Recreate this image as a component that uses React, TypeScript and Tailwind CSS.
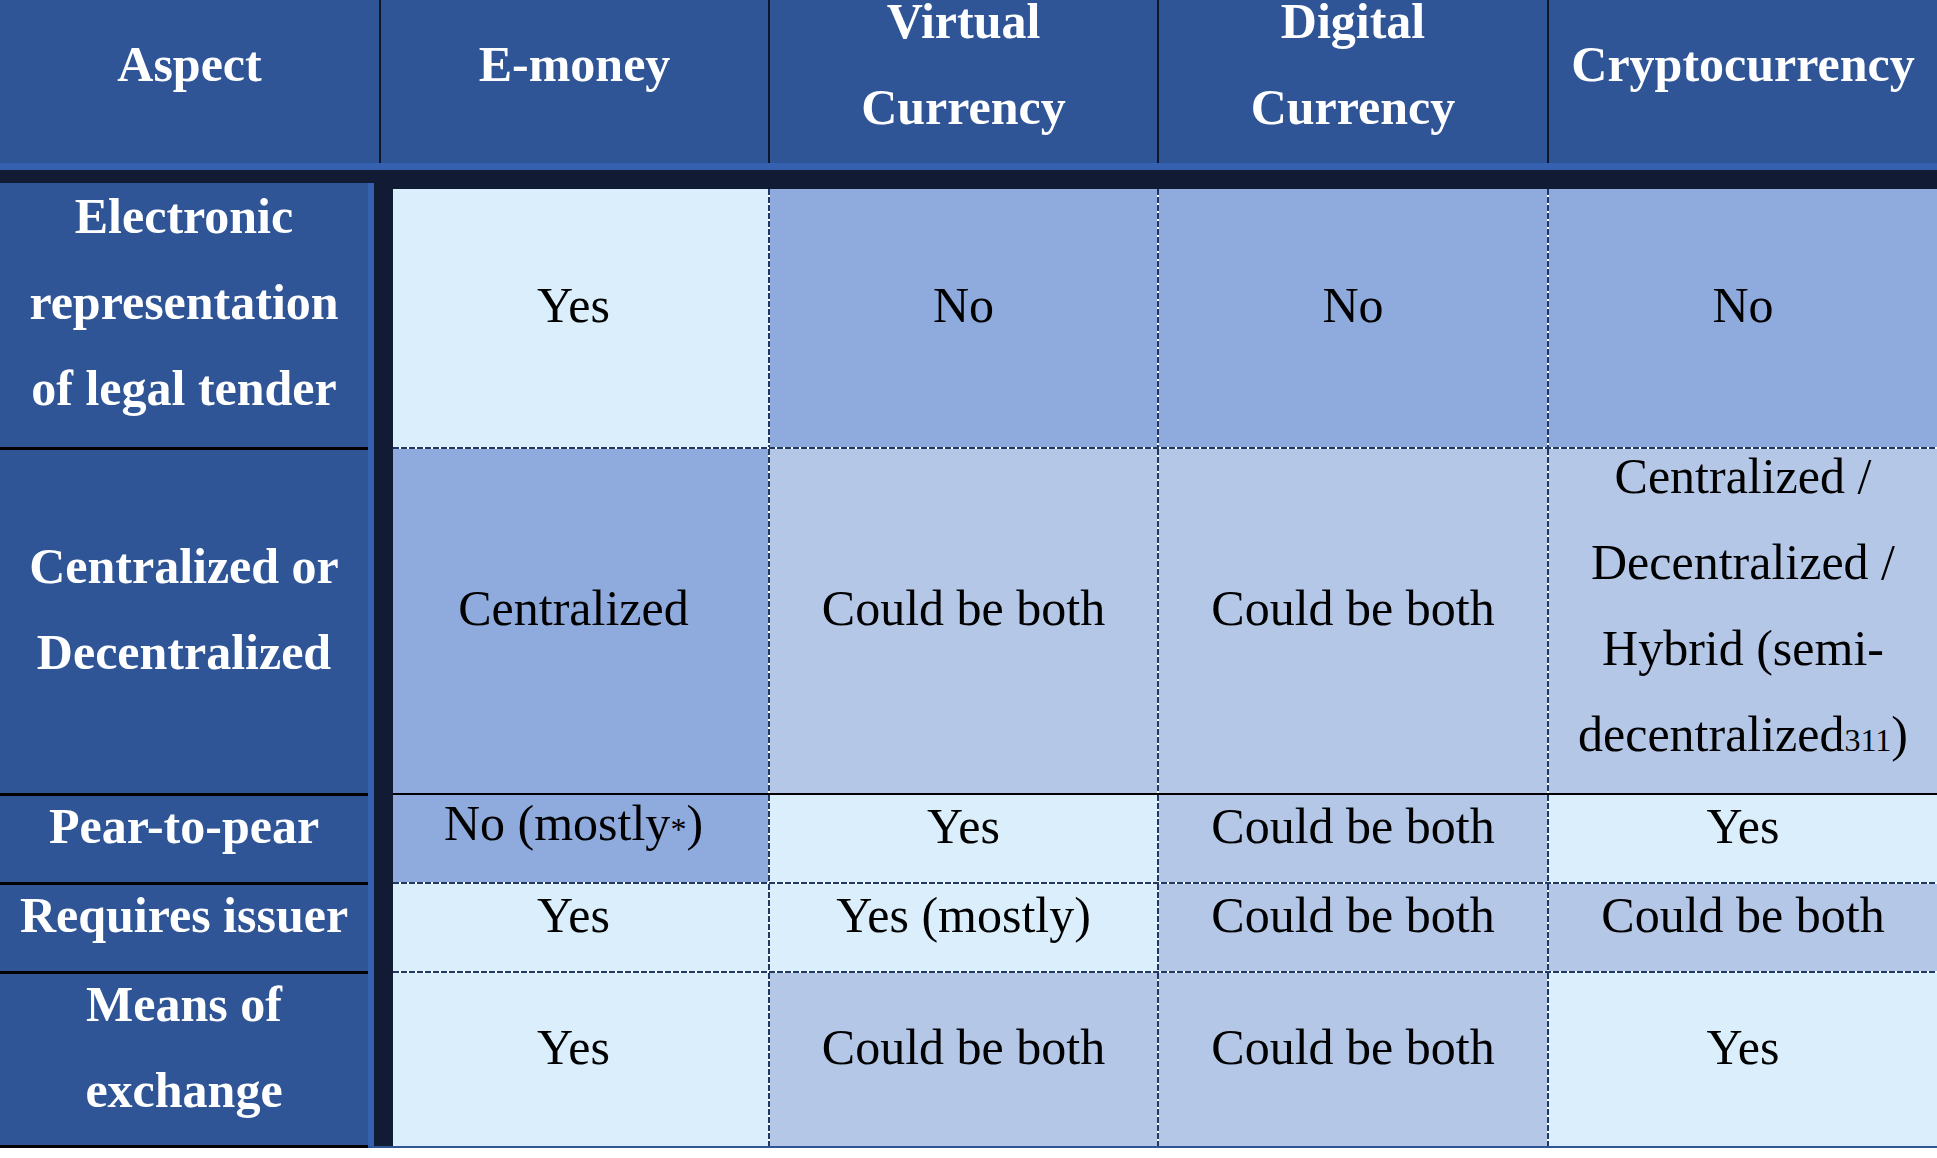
import React from "react";

type Cell = { text: React.ReactNode; bg: string };
type Row = {
  label: string[];
  labelH: string;
  dataH: string;
  cells: Cell[];
  sep: "dashed" | "solid" | "none";
};

const LIGHT = "bg-[#daeefc]";
const MED = "bg-[#8faadc]";
const SOFT = "bg-[#b4c7e7]";

const rows: Row[] = [
  {
    label: ["Electronic", "representation", "of legal tender"],
    labelH: "h-[267px]",
    dataH: "h-[258px]",
    cells: [
      { text: "Yes", bg: LIGHT },
      { text: "No", bg: MED },
      { text: "No", bg: MED },
      { text: "No", bg: MED },
    ],
    sep: "dashed",
  },
  {
    label: ["Centralized or", "Decentralized"],
    labelH: "h-[346px]",
    dataH: "h-[344px]",
    cells: [
      { text: "Centralized", bg: MED },
      { text: "Could be both", bg: SOFT },
      { text: "Could be both", bg: SOFT },
      {
        text: (
          <>
            Centralized /<br />
            Decentralized /<br />
            Hybrid (semi-
            <br />
            decentralized<span className="text-[32px]">311</span>)
          </>
        ),
        bg: SOFT,
      },
    ],
    sep: "solid",
  },
  {
    label: ["Pear-to-pear"],
    labelH: "h-[89px]",
    dataH: "h-[87px]",
    cells: [
      {
        text: (
          <>
            No (mostly<span className="text-[32px]">*</span>)
          </>
        ),
        bg: MED,
      },
      { text: "Yes", bg: LIGHT },
      { text: "Could be both", bg: SOFT },
      { text: "Yes", bg: LIGHT },
    ],
    sep: "dashed",
  },
  {
    label: ["Requires issuer"],
    labelH: "h-[89px]",
    dataH: "h-[87px]",
    cells: [
      { text: "Yes", bg: LIGHT },
      { text: "Yes (mostly)", bg: LIGHT },
      { text: "Could be both", bg: SOFT },
      { text: "Could be both", bg: SOFT },
    ],
    sep: "dashed",
  },
  {
    label: ["Means of", "exchange"],
    labelH: "h-[174px]",
    dataH: "h-[173px]",
    cells: [
      { text: "Yes", bg: LIGHT },
      { text: "Could be both", bg: SOFT },
      { text: "Could be both", bg: SOFT },
      { text: "Yes", bg: LIGHT },
    ],
    sep: "none",
  },
];

const colWidths = ["w-[375px] pr-[14px]", "w-[387px]", "w-[388px]", "w-[388px]"];

function VDash() {
  return (
    <div className="w-[2px] shrink-0 self-stretch bg-[repeating-linear-gradient(180deg,#1f3864_0px,#1f3864_6px,transparent_6px,transparent_8px)]" />
  );
}

function HeadCell({ className, children }: { className: string; children: React.ReactNode }) {
  return (
    <div className={`flex items-center justify-center text-center pb-[35px] ${className}`}>
      <div>{children}</div>
    </div>
  );
}

export default function App() {
  return (
    <div className="w-[1937px] min-h-[1158px] bg-white font-['Liberation_Serif','Times_New_Roman',serif] text-[50px] leading-[86px]">
      {/* header */}
      <div className="flex h-[163px] bg-[#2f5597] text-white font-bold">
        <HeadCell className="w-[379px]">Aspect</HeadCell>
        <HeadCell className="w-[389px] border-l-2 border-[#0e1628]">E-money</HeadCell>
        <HeadCell className="w-[389px] border-l-2 border-[#0e1628]">
          Virtual
          <br />
          Currency
        </HeadCell>
        <HeadCell className="w-[390px] border-l-2 border-[#0e1628]">
          Digital
          <br />
          Currency
        </HeadCell>
        <HeadCell className="w-[390px] border-l-2 border-[#0e1628]">Cryptocurrency</HeadCell>
      </div>
      <div className="h-[7px] bg-[#3561b0]" />
      <div className="h-[13px] bg-[#111b33]" />

      {/* body */}
      <div className="flex">
        <div className="w-[368px] shrink-0 bg-[#2f5597] text-white font-bold">
          {rows.map((r, i) => (
            <div
              key={i}
              className={`flex items-center justify-center text-center pb-[26px] border-b-[3px] border-black ${r.labelH}`}
            >
              <div>
                {r.label.map((l, j) => (
                  <div key={j}>{l}</div>
                ))}
              </div>
            </div>
          ))}
        </div>

        <div className="flex flex-1 border-b-2 border-[#2f5597]">
          <div className="w-[6px] bg-[#3561b0]" />
          <div className="w-[19px] bg-[#111b33]" />
          <div className="flex-1 flex flex-col text-black">
            <div className="h-[6px] bg-[#111b33]" />
            {rows.map((r, i) => (
              <React.Fragment key={i}>
                <div className={`flex ${r.dataH}`}>
                  {r.cells.map((c, j) => (
                    <React.Fragment key={j}>
                      {j > 0 && <VDash />}
                      <div
                        className={`flex items-center justify-center text-center pb-[26px] ${colWidths[j]} ${c.bg}`}
                      >
                        <div>{c.text}</div>
                      </div>
                    </React.Fragment>
                  ))}
                </div>
                {r.sep === "dashed" && (
                  <div className="h-[2px] bg-[repeating-linear-gradient(90deg,#1f3864_0px,#1f3864_6px,transparent_6px,transparent_8px)]" />
                )}
                {r.sep === "solid" && <div className="h-[2px] bg-black" />}
              </React.Fragment>
            ))}
          </div>
        </div>
      </div>
    </div>
  );
}
